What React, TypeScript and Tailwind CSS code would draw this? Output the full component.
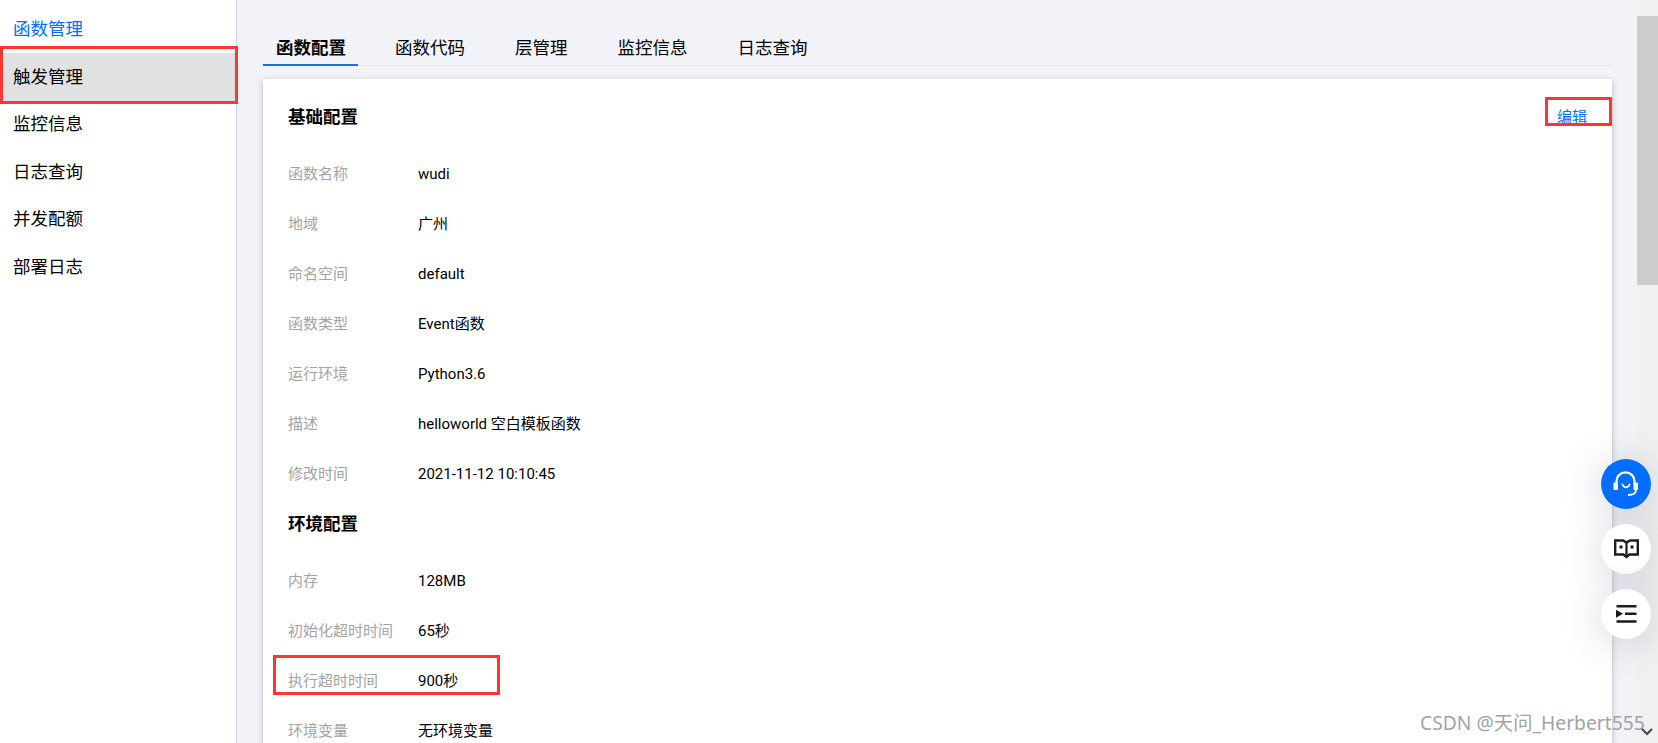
const cjk = { fontFamily: 'Roboto, "Noto Sans CJK SC", sans-serif' };

const side = ["函数管理", "触发管理", "监控信息", "日志查询", "并发配额", "部署日志"];
const tabs = ["函数配置", "函数代码", "层管理", "监控信息", "日志查询"];
const basic = [
  ["函数名称", "wudi"],
  ["地域", "广州"],
  ["命名空间", "default"],
  ["函数类型", "Event函数"],
  ["运行环境", "Python3.6"],
  ["描述", "helloworld 空白模板函数"],
  ["修改时间", "2021-11-12 10:10:45"],
];
const env = [
  ["内存", "128MB"],
  ["初始化超时时间", "65秒"],
  ["执行超时时间", "900秒"],
  ["环境变量", "无环境变量"],
];

function Row({ label, value }: { label: string; value: string }) {
  return (
    <div className="flex h-[50px] shrink-0 items-center text-[15px]">
      <div className="w-[130px] text-[#a3a3a3]">{label}</div>
      <div className="text-black">{value}</div>
    </div>
  );
}

function Fab({ blue, children }: { blue?: boolean; children: React.ReactNode }) {
  return (
    <div
      className={
        blue
          ? "flex h-[50px] w-[50px] items-center justify-center rounded-full bg-[#006eff] shadow-[0_4px_40px_rgba(54,58,80,0.22)]"
          : "flex h-[50px] w-[50px] items-center justify-center rounded-full bg-white shadow-[0_4px_40px_rgba(54,58,80,0.22)]"
      }
    >
      {children}
    </div>
  );
}

export default function App() {
  return (
    <div className="relative flex h-[743px] w-[1658px] overflow-hidden bg-white" style={cjk}>
      <aside className="w-[237px] shrink-0 border-r border-[#cfd5de] bg-white pt-[5.5px] text-[17.5px]">
        {side.map((s, i) => (
          <div
            key={s}
            className={
              i === 0
                ? "flex h-[47.5px] items-center pl-[13px] text-[#006eff]"
                : i === 1
                  ? "flex h-[47.5px] items-center bg-[#e1e1e1] pl-[13px] text-black"
                  : "flex h-[47.5px] items-center pl-[13px] text-black"
            }
          >
            {s}
          </div>
        ))}
      </aside>

      <main className="flex min-w-0 flex-1 flex-col bg-[#f2f3f8] pl-[26px] pr-[25px] pt-[27px]">
        <div className="flex h-[39px] shrink-0 gap-[24px] border-b border-[#e5e7ef] text-[17.5px] text-black">
          {tabs.map((t, i) => (
            <div
              key={t}
              className={
                i === 0
                  ? "-mb-px flex items-center border-b-2 border-[#1a6fe8] pl-[13px] pr-[12px] pt-[5px] font-bold"
                  : "flex items-center px-[13px] pt-[5px]"
              }
            >
              {t}
            </div>
          ))}
        </div>
        <section className="mt-[13px] flex-1 bg-white px-[25px] pt-[13px] shadow-[0_2px_6px_rgba(54,58,80,0.32)]">
          <div className="flex h-[50px] items-center justify-between">
            <h2 className="text-[17.5px] font-bold text-black">基础配置</h2>
            <a className="text-[15px] text-[#006eff]">编辑</a>
          </div>
          <div className="mt-[7.5px]">
            {basic.map(([l, v]) => (
              <Row key={l} label={l} value={v} />
            ))}
          </div>
          <div className="flex h-[50px] items-center">
            <h2 className="text-[17.5px] font-bold text-black">环境配置</h2>
          </div>
          <div className="mt-[7px]">
            {env.map(([l, v]) => (
              <Row key={l} label={l} value={v} />
            ))}
          </div>
        </section>
      </main>

      <div className="flex w-[21px] shrink-0 flex-col bg-[#f1f1f1]">
        <div className="h-[16px]" />
        <div className="h-[269px] bg-[#cdcdcd]" />
      </div>

      {/* annotations */}
      <div className="absolute left-0 top-[46px] h-[58px] w-[238px] border-[3px] border-[#fc3535]" />
      <div className="absolute left-[1545px] top-[97px] h-[29px] w-[67px] border-[3px] border-[#fc3535]" />
      <div className="absolute left-[273px] top-[655px] h-[40px] w-[227px] border-[3px] border-[#fc3535]" />

      {/* floating buttons */}
      <div className="absolute left-[1601px] top-[459px] flex flex-col gap-[15px]">
        <Fab blue>
          <svg width="26" height="26" viewBox="0 0 26 26" fill="none">
            <path d="M3.500 13V10a9 8.700 0 0 1 18 0v3" stroke="#fff" strokeWidth="2.200" />
            <rect x="0.500" y="11.500" width="4.500" height="7.500" rx="0.800" fill="#fff" />
            <rect x="20.500" y="11.500" width="4.500" height="7.500" rx="0.800" fill="#fff" />
            <path d="M22.800 18v1.500c0 3-3 4.500-7.800 4.500" stroke="#fff" strokeWidth="1.800" />
            <path d="M9.500 13.500c.8 1.800 2 2.800 3.500 2.800s2.700-1 3.500-2.800" stroke="#fff" strokeWidth="1.800" strokeLinecap="round" />
          </svg>
        </Fab>
        <Fab>
          <svg width="25" height="20" viewBox="0 0 25 20" fill="none">
            <path d="M1.200 1.500h7.800l3.500 2 3.500-2h7.800v14h-8.300L12.500 18l-3-2.500H1.200z" stroke="#1c1c1c" strokeWidth="2.400" />
            <path d="M12.500 3v14" stroke="#1c1c1c" strokeWidth="2.200" />
            <rect x="5.500" y="6.500" width="3" height="3" fill="#1c1c1c" />
            <rect x="16.500" y="6.500" width="3" height="3" fill="#1c1c1c" />
          </svg>
        </Fab>
        <Fab>
          <svg width="21" height="18" viewBox="0 0 21 18" fill="none">
            <path d="M0.500 1.200h20M0.500 16.500h20M9 8.800h11.500" stroke="#1c1c1c" strokeWidth="2.400" />
            <path d="M0 4.800L7 8.800 0 12.800z" fill="#1c1c1c" />
          </svg>
        </Fab>
      </div>

      {/* watermark */}
      <div
        className="absolute left-[1420px] top-[709px] whitespace-nowrap text-[19.300px] text-[#a3a3a3]"
        style={{ fontFamily: '"Noto Sans", "Noto Sans CJK SC", sans-serif' }}
      >
        CSDN @天问_Herbert555
      </div>

      {/* scrollbar arrow */}
      <svg className="absolute left-[1641px] top-[727px]" width="12" height="10" viewBox="0 0 12 10" fill="none">
        <path d="M1 2l5 5 5-5" stroke="#4a4a4a" strokeWidth="2.200" />
      </svg>
    </div>
  );
}
